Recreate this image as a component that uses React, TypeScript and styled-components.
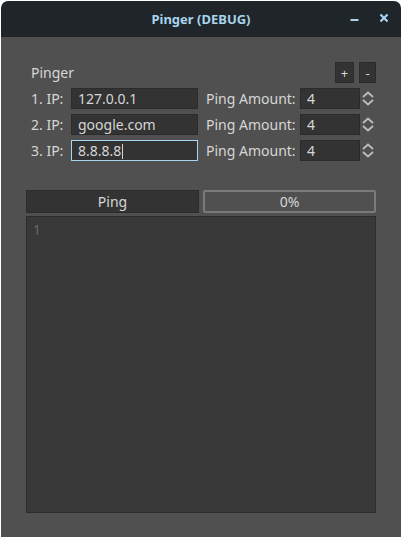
import React from "react"
import styled, { createGlobalStyle } from "styled-components"

const TITLE_COLOR = "#a9d4ee"
const BODY_COLOR = "#505050"
const FIELD_COLOR = "#333333"
const FIELD_BORDER = "#2b2b2b"
const TEXT_COLOR = "#d6d6d6"

const GlobalStyle = createGlobalStyle`
  html, body {
    margin: 0;
    padding: 0;
    background: #ffffff;
  }

  body {
    font-family: "Noto Sans", "Open Sans", sans-serif;
  }
`

const Window = styled.div`
  box-sizing: border-box;
  display: flex;
  flex-direction: column;
  height: 536px;
  margin: 1px 1px 0 1px;
  width: 400px;
`

const TitleBar = styled.div`
  align-items: center;
  background: #1f2528;
  border-radius: 7px 7px 0 0;
  display: flex;
  height: 36px;
  justify-content: center;
  position: relative;
`

const Title = styled.div`
  color: ${ TITLE_COLOR };
  font-size: 13px;
  font-weight: 700;
`

const TitleButtons = styled.div`
  align-items: center;
  display: flex;
  gap: 20px;
  position: absolute;
  right: 12px;
  top: 12px;
`

const Body = styled.div`
  background: ${ BODY_COLOR };
  display: flex;
  flex: 1;
  flex-direction: column;
  padding: 25px 25px 24px 25px;
`

const Group = styled.div`
  display: flex;
  flex-direction: column;
  gap: 5px;
  padding-left: 5px;
`

const HeaderRow = styled.div`
  align-items: center;
  display: flex;
  height: 21px;
  justify-content: space-between;
  margin-bottom: 0;
`

const Label = styled.div<{ $width?: number }>`
  color: ${ TEXT_COLOR };
  font-size: 14px;
  line-height: 21px;
  white-space: nowrap;
  width: ${ ( p ) => p.$width ? `${ p.$width }px` : "auto" };
`

const SmallButtons = styled.div`
  display: flex;
  gap: 5px;
`

const SmallButton = styled.button<{ $width: number }>`
  align-items: center;
  background: ${ FIELD_COLOR };
  border: 1px solid ${ FIELD_BORDER };
  color: ${ TEXT_COLOR };
  display: flex;
  font-family: "Noto Sans", sans-serif;
  font-size: 13px;
  height: 21px;
  justify-content: center;
  padding: 0;
  width: ${ ( p ) => p.$width }px;
`

const Row = styled.div`
  align-items: center;
  display: flex;
  height: 21px;
`

const Field = styled.div<{ $width: number; $focused?: boolean }>`
  background: ${ FIELD_COLOR };
  border: 1px solid ${ ( p ) => p.$focused ? TITLE_COLOR : FIELD_BORDER };
  box-sizing: border-box;
  color: ${ TEXT_COLOR };
  font-size: 14px;
  height: 21px;
  line-height: 19px;
  padding-left: 6px;
  width: ${ ( p ) => p.$width }px;
`

const Caret = styled.span`
  border-left: 1px solid ${ TEXT_COLOR };
  display: inline-block;
  height: 15px;
  margin-left: 1px;
  vertical-align: -3px;
`

const Spacer = styled.div<{ $width: number }>`
  flex: none;
  width: ${ ( p ) => p.$width }px;
`

const Spin = styled.div`
  display: flex;
  flex-direction: column;
  gap: 1px;
  margin-left: 2px;
`

const Actions = styled.div`
  display: grid;
  gap: 4px;
  grid-template-columns: 1fr 1fr;
  height: 22px;
  margin-top: 29px;
`

const PingButton = styled.button`
  background: ${ FIELD_COLOR };
  border: 1px solid ${ FIELD_BORDER };
  color: ${ TEXT_COLOR };
  font-family: "Noto Sans", sans-serif;
  font-size: 14px;
  padding: 0;
`

const Progress = styled.div`
  align-items: center;
  border: 2px solid #7b7b7b;
  border-radius: 2px;
  box-sizing: border-box;
  color: ${ TEXT_COLOR };
  display: flex;
  font-size: 14px;
  justify-content: center;
`

const Output = styled.div`
  background: #383838;
  border: 1px solid #2c2c2c;
  flex: 1;
  margin-top: 4px;
  padding: 3px 0 0 6px;
`

const LineNumber = styled.div`
  color: #6a6a6a;
  font-size: 14px;
`

const Chevron: React.FC<{ up?: boolean }> = ( { up } ) => (
  <svg width="12" height="7" viewBox="0 0 12 7">
    <path
      d={ up ? "M1 6 L6 1.5 L11 6" : "M1 1 L6 5.5 L11 1" }
      fill="none"
      stroke="#bdbdbd"
      strokeWidth="1.8"
    />
  </svg>
)

const hosts = [ "127.0.0.1", "google.com", "8.8.8.8" ]

export default function App() {
  return (
    <>
      <GlobalStyle />
      <Window>
        <TitleBar>
          <Title>Pinger (DEBUG)</Title>
          <TitleButtons>
            <svg width="9" height="9" viewBox="0 0 9 9">
              <rect x="0.5" y="5" width="8" height="2" fill={ TITLE_COLOR } />
            </svg>
            <svg width="10" height="10" viewBox="0 0 10 10">
              <path d="M1.5 1.5 L8.5 8.5 M8.5 1.5 L1.5 8.5" stroke={ TITLE_COLOR } strokeWidth="2.2" />
            </svg>
          </TitleButtons>
        </TitleBar>
        <Body>
          <Group>
            <HeaderRow>
              <Label>Pinger</Label>
              <SmallButtons>
                <SmallButton $width={ 19 }>+</SmallButton>
                <SmallButton $width={ 17 }>-</SmallButton>
              </SmallButtons>
            </HeaderRow>
            {
              hosts.map( ( host, index ) => (
                <Row key={ host }>
                  <Label $width={ 40 }>{ index + 1 }. IP:</Label>
                  <Field $width={ 127 } $focused={ index === hosts.length - 1 }>
                    { host }
                    { index === hosts.length - 1 && <Caret /> }
                  </Field>
                  <Spacer $width={ 8 } />
                  <Label $width={ 94 }>Ping Amount:</Label>
                  <Field $width={ 60 }>4</Field>
                  <Spin>
                    <Chevron up />
                    <Chevron />
                  </Spin>
                </Row>
              ) )
            }
          </Group>
          <Actions>
            <PingButton>Ping</PingButton>
            <Progress>0%</Progress>
          </Actions>
          <Output>
            <LineNumber>1</LineNumber>
          </Output>
        </Body>
      </Window>
    </>
  )
}
